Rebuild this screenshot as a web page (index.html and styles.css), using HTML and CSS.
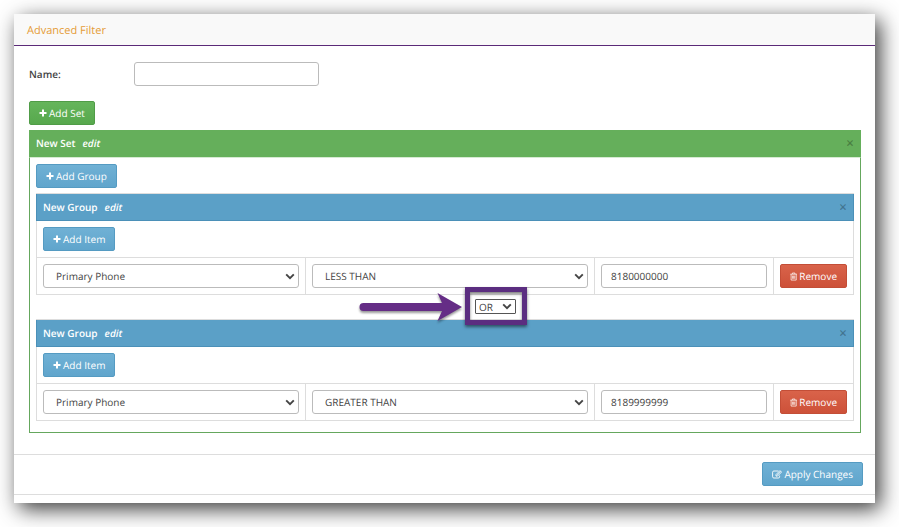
FILE: index.html
```
<!DOCTYPE html>
<html lang="en">
<head>
<meta charset="utf-8">
<title>Advanced Filter</title>
<link rel="stylesheet" href="styles.css">
</head>
<body>
<svg class="sprite" aria-hidden="true">
  <symbol id="plus" viewBox="0 0 8 8"><path d="M3 0.500h2V3h2.500v2H5v2.500H3V5H0.500V3H3z" fill="currentColor"/></symbol>
  <symbol id="trash" viewBox="0 0 8 9"><path d="M0.300 2h7.400M2.600 1.800V0.700h2.800v1.100M1.200 2.200V8.400h5.600V2.200M2.800 3.500v3.500M4 3.500v3.500M5.200 3.500v3.500" fill="none" stroke="currentColor" stroke-width="0.800"/></symbol>
  <symbol id="edit" viewBox="0 0 10 9"><path d="M6.500 1H1.900Q.6 1 .6 2.200v4.600Q.6 8 1.900 8h4.400q1.300 0 1.300-1.200V5.600" fill="none" stroke="currentColor" stroke-width="0.900"/><path d="M4 4.600 8 .6l1.500 1.500-4 4H4z" fill="none" stroke="currentColor" stroke-width="0.900"/><path d="M4.800 5.300 8.600 1.500" stroke="currentColor" stroke-width="0.700"/></symbol>
  <symbol id="chevron" viewBox="0 0 10 7"><path d="M1.200 1.400 5 5.200 8.800 1.400" fill="none" stroke="currentColor" stroke-width="1.900"/></symbol>
</svg>
<main class="panel">
  <header class="panel-head"><h1>Advanced Filter</h1></header>
  <form class="panel-body">
    <div class="name-row">
      <label for="name">Name:</label>
      <input class="field" id="name" type="text">
    </div>
    <button class="btn green" type="button"><svg class="icon"><use href="#plus"/></svg>Add Set</button>
    <section class="set">
      <div class="bar set-bar">
        <strong>New Set</strong><a href="#">edit</a>
        <button class="close" type="button" aria-label="Remove set">×</button>
      </div>
      <div class="set-body">
        <button class="btn blue" type="button"><svg class="icon"><use href="#plus"/></svg>Add Group</button>
        <section class="group">
          <div class="bar group-bar">
            <strong>New Group</strong><a href="#">edit</a>
            <button class="close" type="button" aria-label="Remove group">×</button>
          </div>
          <div class="group-tools"><button class="btn blue" type="button"><svg class="icon"><use href="#plus"/></svg>Add Item</button></div>
          <div class="item">
            <div class="cell"><div class="pick"><select class="field" aria-label="Field"><option>Primary Phone</option></select><svg class="chevron"><use href="#chevron"/></svg></div></div>
            <div class="cell"><div class="pick"><select class="field" aria-label="Comparison"><option>LESS THAN</option></select><svg class="chevron"><use href="#chevron"/></svg></div></div>
            <div class="cell"><input class="field" type="text" aria-label="Value" value="8180000000"></div>
            <div class="cell"><button class="btn red" type="button"><svg class="icon trash"><use href="#trash"/></svg>Remove</button></div>
          </div>
        </section>
        <div class="joiner">
          <div class="pick small">
            <select aria-label="Join groups with"><option>OR</option></select><svg class="chevron"><use href="#chevron"/></svg>
            <div class="highlight"></div>
            <svg class="arrow" viewBox="0 0 104 30" aria-hidden="true"><path d="M4.500 11H83L78.500 1 103 15 78.500 29 83 19H4.500a4 4 0 0 1 0-8z" fill="#652d86"/></svg>
          </div>
        </div>
        <section class="group">
          <div class="bar group-bar">
            <strong>New Group</strong><a href="#">edit</a>
            <button class="close" type="button" aria-label="Remove group">×</button>
          </div>
          <div class="group-tools"><button class="btn blue" type="button"><svg class="icon"><use href="#plus"/></svg>Add Item</button></div>
          <div class="item">
            <div class="cell"><div class="pick"><select class="field" aria-label="Field"><option>Primary Phone</option></select><svg class="chevron"><use href="#chevron"/></svg></div></div>
            <div class="cell"><div class="pick"><select class="field" aria-label="Comparison"><option>GREATER THAN</option></select><svg class="chevron"><use href="#chevron"/></svg></div></div>
            <div class="cell"><input class="field" type="text" aria-label="Value" value="8189999999"></div>
            <div class="cell"><button class="btn red" type="button"><svg class="icon trash"><use href="#trash"/></svg>Remove</button></div>
          </div>
        </section>
      </div>
    </section>
  </form>
  <footer class="panel-foot"><button class="btn blue" type="button"><svg class="icon edit"><use href="#edit"/></svg>Apply Changes</button></footer>
</main>
</body>
</html>
```
FILE: styles.css
```
* { box-sizing: border-box; }
body { margin: 0; padding: 14px 24px 24px 14px; background: #fff; color: #444; font: 10px/16px "Open Sans", sans-serif; text-rendering: geometricPrecision; }
.sprite { position: absolute; width: 0; height: 0; }
button, input, select { font: inherit; color: inherit; margin: 0; text-rendering: inherit; }
.panel { padding-bottom: 8px; background: #fff; box-shadow: 5px 6px 20px rgba(0, 0, 0, .78); }
.panel-head { padding: 9px 13px 6px; background: #f9f9f9; border-bottom: 1px solid #5b2a78; }
h1 { margin: 0; font-size: 11px; line-height: 16px; font-weight: 400; color: #e59c37; }
.panel-body { padding: 16px 14px 21px 15px; }
.name-row { display: flex; align-items: center; margin-bottom: 15px; }
.name-row label { width: 105px; font-weight: 600; }
.name-row .field { width: 185px; }
.field { display: block; width: 100%; height: 24px; padding: 0 9px; background: #fff; border: 1px solid #bbb; border-radius: 3px; }
select { appearance: none; }
select.field { padding-left: 12px; }
.btn { display: flex; align-items: center; gap: 2px; height: 24px; padding: 0 9px; border: 1px solid; border-radius: 2px; color: #fff; font-weight: 500; white-space: nowrap; }
.green { background: linear-gradient(#65b55b, #57a84d); border-color: #509c47; }
.blue { background: linear-gradient(#70b1d5, #60a5cc); border-color: #559bc2; }
.red { background: linear-gradient(#d9634a, #cd5139); border-color: #c34e37; }
.icon { width: 8px; height: 8px; }
.trash { height: 9px; }
.edit { width: 10px; height: 9px; }
.set { margin-top: 5px; }
.bar { display: flex; align-items: center; gap: 7px; height: 27px; padding-bottom: 1px; color: #fff; font-weight: 600; }
.bar strong { font-weight: 600; }
.bar a { color: #fff; font-style: italic; text-decoration: none; }
.close { margin-left: auto; padding: 2px 0 0; border: 0; background: none; color: rgba(0, 0, 0, .28); font-size: 14px; line-height: 16px; }
.set-bar { padding-inline: 7px; background: #65af5b; }
.set-body { padding: 6px 6px 11px; border: 1px solid #65a75d; border-top-color: #d6ead3; }
.group { margin-top: 5px; border: 1px solid #ddd; }
.group-bar { margin: 0 -1px; padding-inline: 6px; background: #5ba0c7; border: solid #4b90b8; border-width: 0 1px 1px; }
.group-tools { padding: 6px; }
.item { display: grid; grid-template-columns: 269fr 289fr 179fr 79px; border-top: 1px solid #ddd; }
.cell { padding: 6px; border-right: 1px solid #ddd; }
.cell:last-child { border-right: 0; }
.cell .btn { width: 100%; justify-content: center; }
.pick { position: relative; }
.chevron { position: absolute; right: 4px; top: 9px; width: 10px; height: 7px; color: #444; pointer-events: none; }
.joiner { display: flex; justify-content: center; padding: 4px 0 5px 101px; }
.joiner + .group { margin-top: 0; }
.small select { display: block; width: 41px; height: 15px; padding: 0 3px; border: 1px solid #555; border-radius: 1px; background: #fff; line-height: 12px; }
.small .chevron { top: 4px; }
.highlight { position: absolute; inset: -12px -11px -11px -10px; border: 5px solid #5b2d80; box-shadow: 0 2px 3px rgba(0, 0, 0, .5), inset 0 2px 3px rgba(0, 0, 0, .5); pointer-events: none; }
.arrow { position: absolute; right: 53px; top: -7px; width: 104px; height: 30px; filter: drop-shadow(0 2px 1px rgba(0, 0, 0, .4)); overflow: visible; }
.panel-foot { display: flex; justify-content: flex-end; padding: 7px 12px 8px; border: solid #ddd; border-width: 1px 0; }
```
